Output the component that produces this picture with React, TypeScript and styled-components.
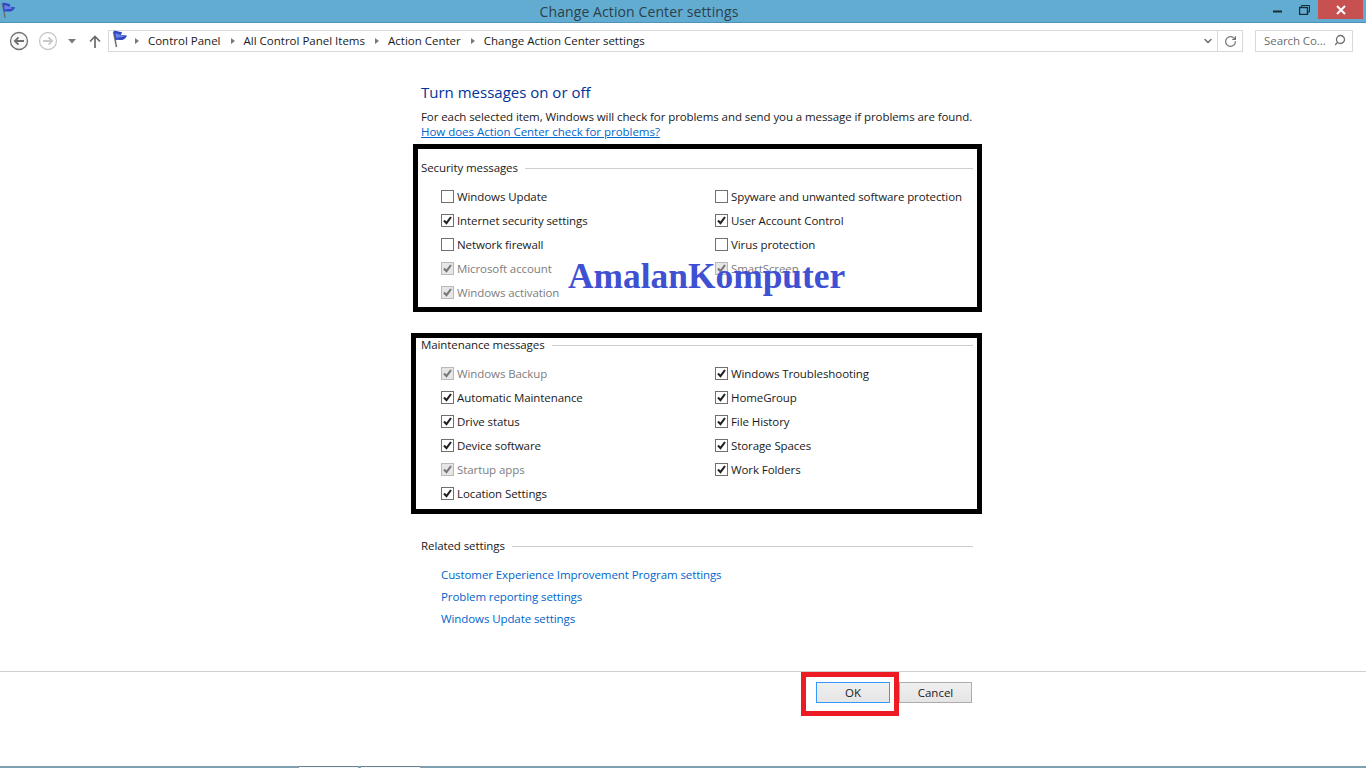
import React from 'react';
import styled, { createGlobalStyle } from 'styled-components';
import { ChevronDown, RotateCw, Search } from 'lucide-react';

const UI_FONT = '"Open Sans", "Noto Sans", sans-serif';

const GlobalStyle = createGlobalStyle`
  html, body { margin: 0; padding: 0; background: #fff; overflow: hidden; }
  body { font-family: ${UI_FONT}; font-size: 11.5px; letter-spacing: -0.09px; color: #1a1a1a; }
`;

const Page = styled.div`
  width: 1366px;
  height: 768px;
  display: flex;
  flex-direction: column;
  background: #fff;
`;

const TitleBar = styled.header`
  height: 22px;
  flex: none;
  display: flex;
  align-items: flex-start;
  background: #62acd1;
  border-bottom: 1px solid #4d93b6;
  box-sizing: content-box;
`;

const TitleIcon = styled.div`
  width: 18px;
  height: 18px;
  padding-top: 2px;
`;

const TitleText = styled.div`
  flex: 1;
  text-align: center;
  font-size: 14px;
  letter-spacing: 0.1px;
  line-height: 24px;
  color: #2c3f4a;
  padding-right: 4px;
`;

const WindowButton = styled.div<{ $w: number; $close?: boolean }>`
  width: ${(p) => p.$w}px;
  height: 19px;
  display: flex;
  align-items: center;
  justify-content: center;
  background: ${(p) => (p.$close ? '#c75050' : 'transparent')};
`;

const NavBar = styled.nav`
  height: 22px;
  flex: none;
  margin-top: 7px;
  padding-left: 9px;
  padding-right: 13px;
  display: flex;
  align-items: center;
`;

const NavSlot = styled.div<{ $w: number; $ml?: number }>`
  width: ${(p) => p.$w}px;
  height: 22px;
  margin-left: ${(p) => p.$ml ?? 0}px;
  display: flex;
  align-items: center;
  justify-content: center;
`;

const AddressBox = styled.div`
  width: 1136px;
  height: 22px;
  box-sizing: border-box;
  border: 1px solid #d9d9d9;
  display: flex;
  align-items: center;
`;

const AddressFlag = styled.div`
  height: 20px;
  padding: 0 0 0 2px;
  margin-top: -2px;
`;

const Crumbs = styled.div`
  flex: 1;
  display: flex;
  align-items: center;
  margin-top: -2px;
  padding-left: 1px;
  letter-spacing: 0;
  color: #1a1a1a;
  white-space: nowrap;
`;

const Crumb = styled.span`
  margin: 0 5px 0 9px;
`;

const CrumbArrow = styled.span`
  width: 0;
  height: 0;
  margin-left: 5px;
  margin-top: 2px;
  border-left: 4px solid #7a7a7a;
  border-top: 3.5px solid transparent;
  border-bottom: 3.5px solid transparent;
`;

const AddressTool = styled.div<{ $w: number; $divider?: boolean; $pl?: number }>`
  width: ${(p) => p.$w}px;
  height: 100%;
  box-sizing: border-box;
  padding-left: ${(p) => p.$pl ?? 0}px;
  display: flex;
  align-items: center;
  justify-content: center;
  color: #707070;
  border-left: ${(p) => (p.$divider ? '1px solid #d9d9d9' : 'none')};
`;

const SearchBox = styled.div`
  width: 98px;
  height: 22px;
  box-sizing: border-box;
  margin-left: 12px;
  padding: 0 6px 2px 8px;
  border: 1px solid #d9d9d9;
  display: flex;
  align-items: center;
  justify-content: space-between;
  color: #6d6d6d;
  white-space: nowrap;
`;

const Main = styled.main`
  flex: 1;
  padding: 30px 0 0 421px;
  display: flex;
  flex-direction: column;
`;

const Heading = styled.h1`
  margin: 0;
  font-size: 15px;
  line-height: 20px;
  font-weight: 400;
  letter-spacing: 0;
  color: #003399;
`;

const Description = styled.p`
  margin: 7px 0 0;
  line-height: 15px;
  letter-spacing: -0.08px;
  white-space: nowrap;
`;

const HelpLink = styled.a`
  display: block;
  line-height: 15px;
  letter-spacing: -0.03px;
  color: #0066cc;
  text-decoration: underline;
`;

const Frame = styled.section<{ $outdent: number; $top: number; $height: number }>`
  position: relative;
  box-sizing: border-box;
  width: ${(p) => 569 + p.$outdent}px;
  height: ${(p) => p.$height}px;
  margin: ${(p) => p.$top}px 0 0 ${(p) => -8 - p.$outdent}px;
  padding-left: ${(p) => 3 + p.$outdent}px;
  border: 5px solid #000;
`;

const GroupTitle = styled.div<{ $top?: number }>`
  display: flex;
  align-items: center;
  width: 552px;
  line-height: 16px;
  margin-top: ${(p) => p.$top ?? 0}px;
  white-space: nowrap;

  &::after {
    content: '';
    flex: 1;
    height: 1px;
    margin-left: 7px;
    background: #cfcfcf;
  }
`;

const OptionGrid = styled.div<{ $top: number }>`
  display: grid;
  grid-template-columns: 274px 1fr;
  grid-auto-flow: column;
  grid-template-rows: repeat(5, 24px);
  margin: ${(p) => p.$top}px 0 0 20px;
`;

const MaintenanceGrid = styled(OptionGrid)`
  grid-template-rows: repeat(6, 24px);
`;

const Option = styled.label<{ $muted?: boolean }>`
  display: flex;
  align-items: center;
  gap: 3px;
  white-space: nowrap;
  color: ${(p) => (p.$muted ? '#7d7d7d' : '#1a1a1a')};
`;

const Box = styled.span<{ $muted?: boolean }>`
  width: 13px;
  height: 13px;
  box-sizing: border-box;
  flex: none;
  border: 1px solid ${(p) => (p.$muted ? '#b9b9b9' : '#707070')};
  background: ${(p) => (p.$muted ? '#e6e6e6' : '#fff')};
  display: flex;
  align-items: center;
  justify-content: center;
`;

const Watermark = styled.div`
  position: absolute;
  left: 150px;
  top: 107px;
  font-family: 'Liberation Serif', serif;
  font-weight: 700;
  font-size: 35.4px;
  letter-spacing: 0;
  line-height: 40px;
  color: #4050d2;
  white-space: nowrap;
`;

const RelatedLinks = styled.div`
  margin: 10px 0 0 20px;
  display: flex;
  flex-direction: column;
`;

const RelatedLink = styled.a`
  line-height: 22px;
  color: #0066cc;
`;

const Footer = styled.footer`
  height: 95px;
  flex: none;
  box-sizing: border-box;
  border-top: 1px solid #cfcfcf;
  display: flex;
  align-items: flex-start;
  justify-content: flex-end;
  padding-right: 394px;
`;

const Highlight = styled.div`
  width: 98px;
  height: 44px;
  box-sizing: border-box;
  border: 5px solid #ed1c24;
  padding-left: 10px;
  padding-top: 5px;
`;

const Button = styled.button<{ $focus?: boolean }>`
  width: ${(p) => (p.$focus ? 74 : 73)}px;
  height: 21px;
  padding: 0;
  box-sizing: border-box;
  font-family: inherit;
  font-size: 11.5px;
  color: #1a1a1a;
  border: 1px solid ${(p) => (p.$focus ? '#3399ff' : '#acacac')};
  background: linear-gradient(#f0f0f0, #e5e5e5);
`;

const CancelButton = styled(Button)`
  margin-top: 10px;
`;

const TaskbarEdge = styled.div`
  height: 2px;
  flex: none;
  display: flex;
  padding-left: 299px;
  gap: 3px;
  background: #7d9fb0;
`;

const TaskbarTab = styled.div`
  width: 59px;
  background: #f4f7f8;
  border-top: 1px solid #66808f;
`;

const FlagIcon = ({ size = 18 }: { size?: number }) => (
  <svg width={size} height={size} viewBox="0 0 18 18">
    <path d="M2.5 2 L5.5 17" stroke="#6b6b6b" strokeWidth="1.4" fill="none" />
    <path d="M2.5 1 C6 0 8 2.5 11 2 L10 5 L16 5.5 C15 8 13.5 9.5 11 10 C8.5 10.5 6.5 9 4.5 10.5 Z" fill="#2f49c4" />
    <path d="M4.5 3.5 C7 3 8 5 10 5 L13.5 6.5 C11 7.5 8 7 5 8 Z" fill="#6d84e6" />
  </svg>
);

const CircleArrow = ({ dir, faded }: { dir: 'left' | 'right'; faded?: boolean }) => {
  const color = faded ? '#c9c9c9' : '#6f6f6f';
  return (
    <svg width="20" height="20" viewBox="0 0 20 20" fill="none">
      <circle cx="10" cy="10" r="8.5" stroke={color} strokeWidth="1.3" fill={faded ? '#fff' : '#f8f8f8'} />
      <path
        d={dir === 'left' ? 'M15 10 H6 M9.5 6.3 L5.8 10 L9.5 13.7' : 'M5 10 H14 M10.5 6.3 L14.2 10 L10.5 13.7'}
        stroke={color}
        strokeWidth="1.8"
      />
    </svg>
  );
};

const Check = ({ muted }: { muted?: boolean }) => (
  <svg width="11" height="11" viewBox="0 0 11 11" fill="none">
    <path d="M2 5.5 L4.5 8.2 L9 2" stroke={muted ? '#777' : '#222'} strokeWidth="2.1" />
  </svg>
);

interface Item {
  label: string;
  checked?: boolean;
  muted?: boolean;
}

const securityItems: Item[] = [
  { label: 'Windows Update' },
  { label: 'Internet security settings', checked: true },
  { label: 'Network firewall' },
  { label: 'Microsoft account', checked: true, muted: true },
  { label: 'Windows activation', checked: true, muted: true },
  { label: 'Spyware and unwanted software protection' },
  { label: 'User Account Control', checked: true },
  { label: 'Virus protection' },
  { label: 'SmartScreen', checked: true, muted: true },
];

const maintenanceItems: Item[] = [
  { label: 'Windows Backup', checked: true, muted: true },
  { label: 'Automatic Maintenance', checked: true },
  { label: 'Drive status', checked: true },
  { label: 'Device software', checked: true },
  { label: 'Startup apps', checked: true, muted: true },
  { label: 'Location Settings', checked: true },
  { label: 'Windows Troubleshooting', checked: true },
  { label: 'HomeGroup', checked: true },
  { label: 'File History', checked: true },
  { label: 'Storage Spaces', checked: true },
  { label: 'Work Folders', checked: true },
];

const crumbs = ['Control Panel', 'All Control Panel Items', 'Action Center', 'Change Action Center settings'];

const related = [
  'Customer Experience Improvement Program settings',
  'Problem reporting settings',
  'Windows Update settings',
];

const renderOption = (item: Item) => (
  <Option key={item.label} $muted={item.muted}>
    <Box $muted={item.muted}>{item.checked && <Check muted={item.muted} />}</Box>
    {item.label}
  </Option>
);

export default function App() {
  return (
    <Page>
      <GlobalStyle />
      <TitleBar>
        <TitleIcon>
          <FlagIcon size={17} />
        </TitleIcon>
        <TitleText>Change Action Center settings</TitleText>
        <WindowButton $w={26}>
          <svg width="9" height="7" viewBox="0 0 9 7">
            <rect y="4.5" width="9" height="2" fill="#1c2a33" />
          </svg>
        </WindowButton>
        <WindowButton $w={28}>
          <svg width="11" height="10" viewBox="0 0 11 10" fill="none" stroke="#1c2a33">
            <path d="M2.5 2 V0.5 H10.5 V7 H8.5" />
            <rect x="0.5" y="2.5" width="8" height="7" strokeWidth="1.4" />
          </svg>
        </WindowButton>
        <WindowButton $w={45} $close>
          <svg width="10" height="10" viewBox="0 0 10 10" stroke="#fff" strokeWidth="2">
            <path d="M1 1 L9 9 M9 1 L1 9" />
          </svg>
        </WindowButton>
        <WindowButton $w={3} />
      </TitleBar>

      <NavBar>
        <NavSlot $w={20}>
          <CircleArrow dir="left" />
        </NavSlot>
        <NavSlot $w={38}>
          <CircleArrow dir="right" faded />
        </NavSlot>
        <NavSlot $w={10}>
          <svg width="8" height="5" viewBox="0 0 8 5">
            <path d="M0 0 H8 L4 4.5 Z" fill="#7a7a7a" />
          </svg>
        </NavSlot>
        <NavSlot $w={26} $ml={5}>
          <svg width="12" height="13" viewBox="0 0 12 13" fill="none" stroke="#6a6a6a" strokeWidth="1.7">
            <path d="M6 13 V1.5 M1 6.5 L6 1.5 L11 6.5" />
          </svg>
        </NavSlot>
        <AddressBox>
          <AddressFlag>
            <FlagIcon size={18} />
          </AddressFlag>
          <Crumbs>
            {crumbs.map((c) => (
              <React.Fragment key={c}>
                <CrumbArrow />
                <Crumb>{c}</Crumb>
              </React.Fragment>
            ))}
          </Crumbs>
          <AddressTool $w={25} $pl={7}>
            <ChevronDown size={12} strokeWidth={3} />
          </AddressTool>
          <AddressTool $w={25} $divider>
            <RotateCw size={13} strokeWidth={2.2} />
          </AddressTool>
        </AddressBox>
        <SearchBox>
          Search Co...
          <Search size={12} strokeWidth={2.6} style={{ transform: 'scaleX(-1)' }} />
        </SearchBox>
      </NavBar>

      <Main>
        <Heading>Turn messages on or off</Heading>
        <Description>
          For each selected item, Windows will check for problems and send you a message if problems are found.
        </Description>
        <HelpLink>How does Action Center check for problems?</HelpLink>

        <Frame $outdent={0} $top={5} $height={168}>
          <GroupTitle $top={11}>Security messages</GroupTitle>
          <OptionGrid $top={8}>{securityItems.map(renderOption)}</OptionGrid>
          <Watermark>AmalanKomputer</Watermark>
        </Frame>

        <Frame $outdent={2} $top={21} $height={181}>
          <GroupTitle $top={-1}>Maintenance messages</GroupTitle>
          <MaintenanceGrid $top={8}>{maintenanceItems.map(renderOption)}</MaintenanceGrid>
        </Frame>

        <GroupTitle $top={24}>Related settings</GroupTitle>
        <RelatedLinks>
          {related.map((r) => (
            <RelatedLink key={r}>{r}</RelatedLink>
          ))}
        </RelatedLinks>
      </Main>

      <Footer>
        <Highlight>
          <Button $focus>OK</Button>
        </Highlight>
        <CancelButton>Cancel</CancelButton>
      </Footer>
      <TaskbarEdge>
        <TaskbarTab />
        <TaskbarTab />
      </TaskbarEdge>
    </Page>
  );
}
